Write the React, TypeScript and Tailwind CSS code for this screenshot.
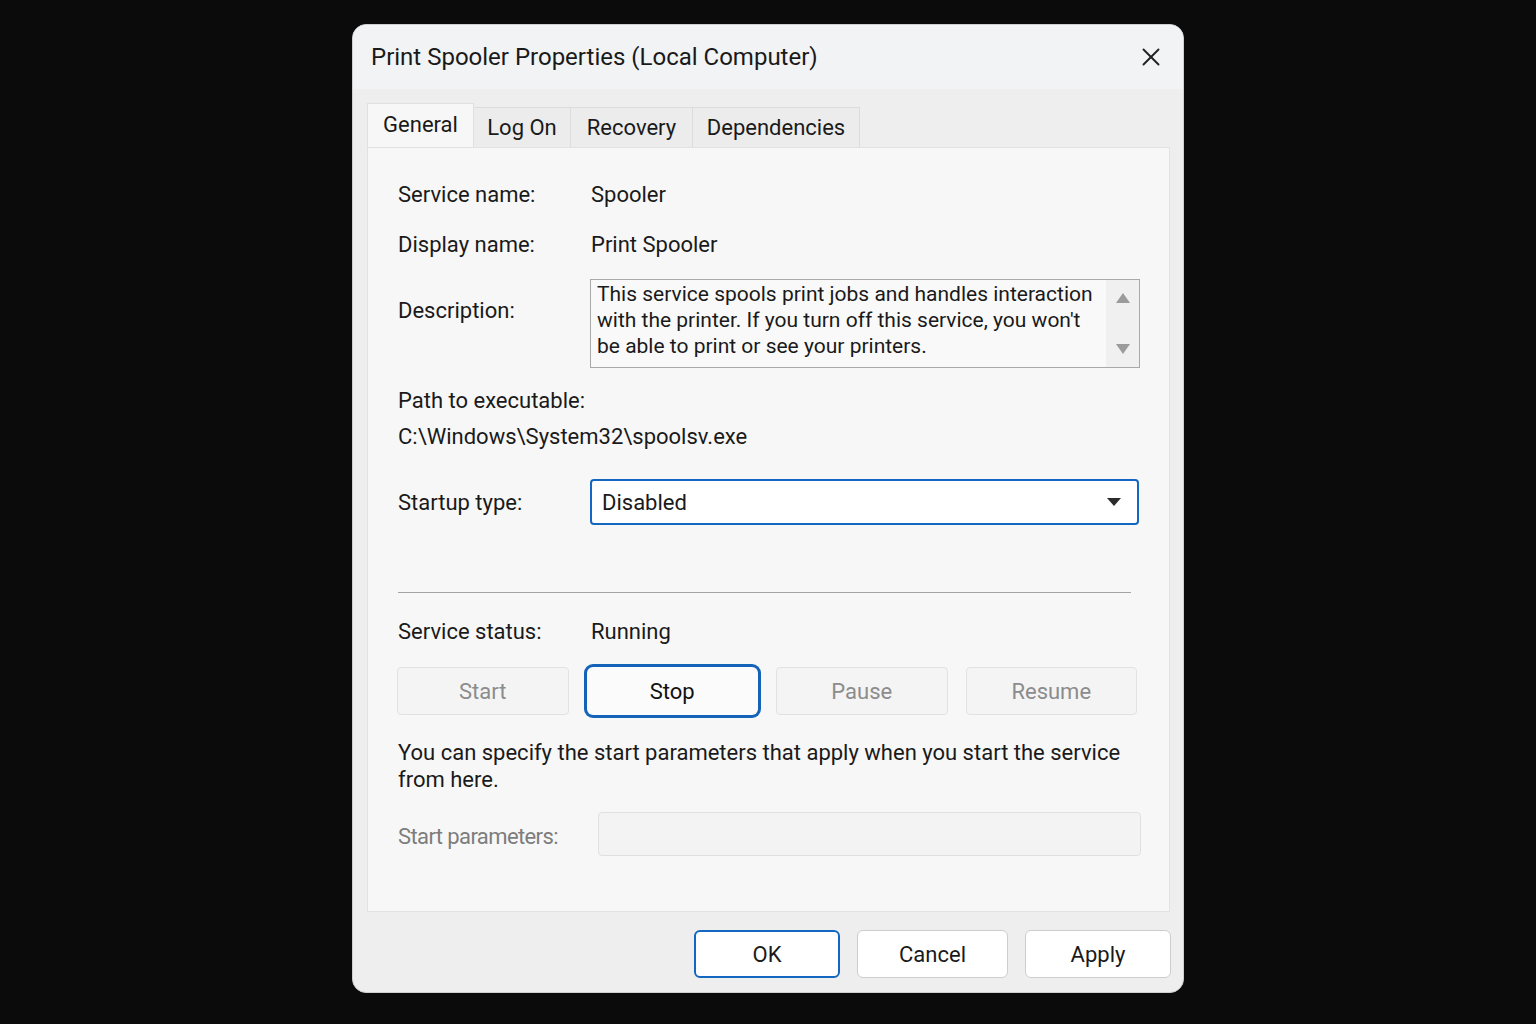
import { X } from "lucide-react";

function ActionButton({ label, active }: { label: string; active?: boolean }) {
  if (active) {
    return (
      <button className="h-[48px] rounded-[6px] bg-[#fbfbfb] text-[#111] ring-[3px] ring-[#1463b8] text-[22px]">
        {label}
      </button>
    );
  }
  return (
    <button className="h-[48px] rounded-[4px] border border-[#e2e2e2] bg-[#f4f4f4] text-[22px] text-[#8c8c8c]">
      {label}
    </button>
  );
}

export default function App() {
  return (
    <div
      className="min-h-screen w-full bg-[#0b0b0b] flex justify-center pt-[24px]"
      style={{ fontFamily: "Roboto, 'Liberation Sans', sans-serif" }}
    >
      <div className="w-[832px] h-[969px] rounded-[14px] border border-[#cfcfcf] bg-[#eeeeee] overflow-hidden flex flex-col">
        {/* title bar */}
        <div className="h-[64px] bg-[#f2f3f5] flex items-center justify-between pl-[18px] pr-[17px]">
          <span className="text-[24px] text-[#1a1a1a]">Print Spooler Properties (Local Computer)</span>
          <X className="w-[30px] h-[30px] text-[#222]" strokeWidth={1.5} />
        </div>

        <div className="px-[14px] pt-[14px] flex flex-col">
          {/* tabs */}
          <div className="flex items-end h-[44px]">
            <div className="h-[44px] w-[107px] bg-[#f7f7f7] border border-b-0 border-[#e0e0e0] flex items-center justify-center text-[22px] text-[#1a1a1a] pb-[3px]">
              General
            </div>
            <div className="h-[40px] w-[97px] bg-[#ececec] border-t border-r border-[#dcdcdc] flex items-center justify-center text-[22px] text-[#1a1a1a]">
              Log On
            </div>
            <div className="h-[40px] w-[122px] bg-[#ececec] border-t border-r border-[#dcdcdc] flex items-center justify-center text-[22px] text-[#1a1a1a]">
              Recovery
            </div>
            <div className="h-[40px] w-[167px] bg-[#ececec] border-t border-r border-[#dcdcdc] flex items-center justify-center text-[22px] text-[#1a1a1a]">
              Dependencies
            </div>
          </div>

          {/* panel */}
          <div className="h-[765px] w-[803px] bg-[#f7f7f7] border border-[#e2e2e2] pl-[30px] pr-[29px] pt-[31px] text-[22px] text-[#1a1a1a] flex flex-col">
            <div className="flex h-[30px] items-center">
              <span className="w-[193px]">Service name:</span>
              <span>Spooler</span>
            </div>
            <div className="flex h-[30px] items-center mt-[20px]">
              <span className="w-[193px]">Display name:</span>
              <span>Print Spooler</span>
            </div>
            <div className="flex mt-[20px]">
              <span className="w-[192px] pt-[15px]">Description:</span>
              <div className="flex-1 h-[89px] border border-[#a9a9a9] bg-[#f9f9f9] flex">
                <p className="flex-1 pl-[6px] pt-[1px] text-[21px] leading-[26px]">
                  This service spools print jobs and handles interaction with the printer. If you turn off this
                  service, you won't be able to print or see your printers.
                </p>
                <div className="w-[33px] bg-[#f0f0f0] flex flex-col items-center justify-between py-[13px]">
                  <svg width="14" height="10" viewBox="0 0 14 10">
                    <path d="M7 0 L14 10 L0 10 Z" fill="#9b9b9b" />
                  </svg>
                  <svg width="14" height="10" viewBox="0 0 14 10">
                    <path d="M0 0 L14 0 L7 10 Z" fill="#9b9b9b" />
                  </svg>
                </div>
              </div>
            </div>
            <div className="h-[30px] flex items-center mt-[17px]">Path to executable:</div>
            <div className="h-[30px] flex items-center mt-[6px]">C:\Windows\System32\spoolsv.exe</div>
            <div className="flex items-center mt-[28px]">
              <span className="w-[192px]">Startup type:</span>
              <div className="flex-1 h-[46px] mr-[1px] rounded-[4px] border-2 border-[#1467c0] bg-white flex items-center justify-between pl-[10px] pr-[16px]">
                <span>Disabled</span>
                <svg width="14" height="8" viewBox="0 0 14 8">
                  <path d="M0 0 L14 0 L7 8 Z" fill="#2b2b2b" />
                </svg>
              </div>
            </div>

            <div className="mt-[67px] mr-[9px] h-px bg-[#a3a3a3]" />

            <div className="flex h-[30px] items-center mt-[23px]">
              <span className="w-[193px]">Service status:</span>
              <span>Running</span>
            </div>
            <div className="grid grid-cols-4 gap-[18px] mt-[21px] mr-[3px] -ml-px">
              <ActionButton label="Start" />
              <ActionButton label="Stop" active />
              <ActionButton label="Pause" />
              <ActionButton label="Resume" />
            </div>

            <p className="mt-[24px] leading-[27px]">
              You can specify the start parameters that apply when you start the service from here.
            </p>

            <div className="flex items-center mt-[19px]">
              <span className="w-[200px] text-[#7d7d7d] pt-[4px] tracking-[-0.6px]">Start parameters:</span>
              <div className="flex-1 h-[44px] -mr-px rounded-[4px] border border-[#e0e0e0] bg-[#f3f3f3]" />
            </div>
          </div>
        </div>

        {/* footer buttons */}
        <div className="flex justify-end gap-[17px] pr-[12px] mt-[18px] text-[22px] text-[#1a1a1a]">
          <button className="w-[146px] h-[48px] rounded-[6px] border-2 border-[#1467c0] bg-white">OK</button>
          <button className="w-[151px] h-[48px] rounded-[6px] border border-[#cdcdcd] bg-white">Cancel</button>
          <button className="w-[146px] h-[48px] rounded-[6px] border border-[#cdcdcd] bg-white">Apply</button>
        </div>
      </div>
    </div>
  );
}
